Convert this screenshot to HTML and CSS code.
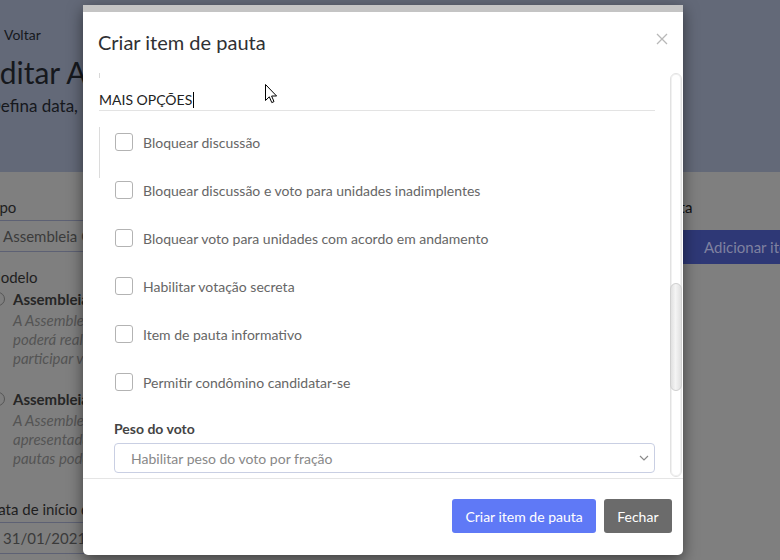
FILE: index.html
```html
<!DOCTYPE html>
<html lang="pt-BR">
<head>
<meta charset="utf-8">
<title>Criar item de pauta</title>
<link rel="stylesheet" href="styles.css">
</head>
<body>
<div class="page">
  <header class="hero">
    <div class="back">Voltar</div>
    <h1 class="hero-title">Editar Assembleia</h1>
    <p class="hero-sub">Defina data, horário e pautas da assembleia</p>
  </header>
  <main class="content">
    <section class="left-col">
      <div class="field-label">Tipo</div>
      <div class="field-input">Assembleia Ordinária</div>
      <div class="field-label gap-label">Modelo</div>
      <div class="radio-opt first">
        <span class="radio"></span>
        <div class="radio-text">
          <div class="radio-title">Assembleia online</div>
          <div class="radio-desc">A Assembleia online<br>poderá realizar<br>participar via</div>
        </div>
      </div>
      <div class="radio-opt second">
        <span class="radio"></span>
        <div class="radio-text">
          <div class="radio-title">Assembleia presencial</div>
          <div class="radio-desc">A Assembleia será<br>apresentada<br>pautas poderão</div>
        </div>
      </div>
      <div class="field-label date-label">Data de início da assembleia</div>
      <div class="field-input">31/01/2021</div>
    </section>
    <section class="right-col">
      <div class="field-label">Pauta</div>
      <div class="add-btn">Adicionar item</div>
    </section>
  </main>
</div>

<div class="modal">
  <div class="modal-header">
    <h2 class="modal-title">Criar item de pauta</h2>
    <svg class="close" width="12" height="12" viewBox="0 0 12 12"><path d="M1 1 L11 11 M11 1 L1 11" stroke="#b8b8b8" stroke-width="1.3" fill="none"/></svg>
  </div>
  <div class="modal-body">
    <div class="scroll-content">
      <div class="tick"></div>
      <div class="section-title">MAIS OPÇÕES<span class="caret"></span></div>
      <div class="opt-group">
        <label class="opt"><span class="box"></span>Bloquear discussão</label>
      </div>
      <label class="opt"><span class="box"></span>Bloquear discussão e voto para unidades inadimplentes</label>
      <label class="opt"><span class="box"></span>Bloquear voto para unidades com acordo em andamento</label>
      <label class="opt"><span class="box"></span>Habilitar votação secreta</label>
      <label class="opt"><span class="box"></span>Item de pauta informativo</label>
      <label class="opt"><span class="box"></span>Permitir condômino candidatar-se</label>
      <div class="weight-label">Peso do voto</div>
      <div class="select">
        <span>Habilitar peso do voto por fração</span>
        <svg width="10" height="6" viewBox="0 0 10 6"><path d="M1 1 L5 5 L9 1" stroke="#8a8a8a" stroke-width="1.2" fill="none"/></svg>
      </div>
    </div>
    <div class="scrollbar"><div class="thumb"></div></div>
  </div>
  <div class="modal-footer">
    <button class="btn btn-primary">Criar item de pauta</button>
    <button class="btn btn-dark">Fechar</button>
  </div>
</div>

<svg class="cursor" width="13" height="20" viewBox="0 0 13 20"><path d="M0.5 0.5 L0.5 16.5 L4.3 12.8 L6.8 18.6 L9 17.6 L6.6 12 L11.6 12 Z" fill="#fff" stroke="#000" stroke-width="1" stroke-linejoin="round"/></svg>
</body>
</html>
```
FILE: styles.css
```css
html, body {
  margin: 0;
  padding: 0;
  width: 780px;
  height: 560px;
  overflow: hidden;
}
body {
  font-family: Lato, "Open Sans", sans-serif;
  background: #7f7f7f;
  position: relative;
}
.page {
  display: flex;
  flex-direction: column;
}
.hero {
  height: 172px;
  box-sizing: border-box;
  background: #636978;
  padding-top: 26px;
  color: #16181d;
  overflow: hidden;
}
.back {
  font-size: 14px;
  line-height: 18px;
  padding-left: 4px;
}
.hero-title {
  margin: 10px 0 0 -17px;
  font-size: 30px;
  line-height: 36px;
  font-weight: 400;
  white-space: nowrap;
}
.hero-sub {
  margin: 5px 0 0 -12px;
  font-size: 17px;
  line-height: 22px;
  white-space: nowrap;
}
.content {
  display: flex;
  justify-content: space-between;
}
.left-col {
  margin-left: -13px;
  width: 320px;
  padding-top: 25px;
  color: #1e1e1e;
}
.field-label {
  font-size: 15px;
  line-height: 20px;
  white-space: nowrap;
}
.field-input {
  margin-top: 3px;
  height: 32px;
  box-sizing: border-box;
  border-top: 1px solid #5d6174;
  border-bottom: 1px solid #5d6174;
  padding-left: 16px;
  font-size: 15px;
  line-height: 30px;
  color: #3b3b3b;
}
.gap-label { margin-top: 15px; }
.radio-opt {
  display: flex;
  align-items: flex-start;
  gap: 8px;
  margin-left: 4px;
}
.radio-opt.first { margin-top: 2px; }
.radio-opt.second { margin-top: 21px; }
.radio {
  width: 14px;
  height: 14px;
  border: 1px solid #555;
  border-radius: 50%;
  box-sizing: border-box;
  margin-top: 3px;
}
.radio-title {
  font-size: 15px;
  line-height: 20px;
  font-weight: 700;
  color: #262626;
  white-space: nowrap;
}
.radio-desc {
  margin-top: 2px;
  font-size: 15px;
  line-height: 19px;
  font-style: italic;
  color: #545454;
  white-space: nowrap;
}
.date-label { margin-top: 31px; }
.right-col {
  width: 125px;
  padding-top: 25px;
  color: #111;
}
.add-btn {
  margin: 13px 0 0 28px;
  width: 140px;
  height: 34px;
  background: #2e3876;
  color: #7f81a0;
  font-size: 15px;
  line-height: 34px;
  padding-left: 21px;
  white-space: nowrap;
}

/* modal */
.modal {
  position: absolute;
  left: 83px;
  top: 5px;
  width: 600px;
  height: 550px;
  box-sizing: border-box;
  background: #fff;
  border-top: 7px solid #c4c4c4;
  border-radius: 0 0 5px 5px;
  box-shadow: 0 5px 15px rgba(0, 0, 0, 0.5);
  display: flex;
  flex-direction: column;
}
.modal-header {
  height: 58px;
  box-sizing: border-box;
  padding: 18px 15px 0 15px;
  display: flex;
  justify-content: space-between;
  align-items: flex-start;
}
.modal-title {
  margin: 0;
  font-size: 20px;
  line-height: 24px;
  font-weight: 400;
  color: #2f3033;
}
.close {
  margin-top: 3px;
}
.modal-body {
  height: 408px;
  display: flex;
  overflow: hidden;
}
.scroll-content {
  width: 556px;
  padding: 0 15px 0 16px;
  overflow: hidden;
}
.tick {
  width: 1px;
  height: 5px;
  margin-top: 3px;
  background: #d8d8d8;
}
.section-title {
  margin-top: 12px;
  font-size: 14px;
  line-height: 20px;
  color: #222;
  border-bottom: 1px solid #e3e3e3;
  display: flex;
  align-items: center;
}
.caret {
  display: inline-block;
  width: 1px;
  height: 16px;
  background: #000;
  margin-left: 1px;
}
.opt-group {
  margin-top: 16px;
  border-left: 1px solid #dcdcdc;
  padding: 0 0 3px 15px;
  margin-bottom: -3px;
}
.opt {
  display: flex;
  align-items: center;
  height: 30px;
  margin-bottom: 18px;
  font-size: 14px;
  color: #666;
}
.scroll-content > .opt {
  padding-left: 16px;
}
.box {
  width: 18px;
  height: 18px;
  box-sizing: border-box;
  border: 1px solid #b3b3b3;
  border-radius: 3px;
  margin-right: 10px;
  flex-shrink: 0;
}
.weight-label {
  padding: 4px 0 0 15px;
  font-size: 14px;
  line-height: 20px;
  font-weight: 700;
  color: #444;
}
.select {
  margin: 4px 0 0 15px;
  height: 30px;
  box-sizing: border-box;
  border: 1px solid #c9cfe3;
  border-radius: 4px;
  padding: 0 5px 0 16px;
  display: flex;
  align-items: center;
  justify-content: space-between;
  font-size: 14px;
  color: #888;
}
.scrollbar {
  width: 12px;
  height: 404px;
  margin-top: 3px;
  box-sizing: border-box;
  border: 1px solid #e2e2e2;
  border-radius: 6px;
  background: #fff;
  position: relative;
  box-shadow: inset 0 0 0 1px #f1f1f1;
}
.thumb {
  margin-top: 209px;
  height: 106px;
  border: 1px solid #cfcfcf;
  border-radius: 6px;
  background: linear-gradient(to right, #e0e0e0, #f4f4f4 45%, #e0e0e0);
  margin-left: -1px;
  margin-right: -1px;
}
.modal-footer {
  flex: 1;
  border-top: 1px solid #e5e5e5;
  padding: 20px 11px 0 0;
  display: flex;
  justify-content: flex-end;
  align-items: flex-start;
  gap: 8px;
}
.btn {
  height: 34px;
  border: none;
  border-radius: 3px;
  padding: 0 13.5px;
  font-family: Lato, "Open Sans", sans-serif;
  font-size: 14px;
  color: #fff;
}
.btn-primary { background: #5f79f6; padding: 0 13px; }
.btn-dark { background: #6b6b6b; }
.cursor {
  position: absolute;
  left: 265px;
  top: 84px;
}
```
